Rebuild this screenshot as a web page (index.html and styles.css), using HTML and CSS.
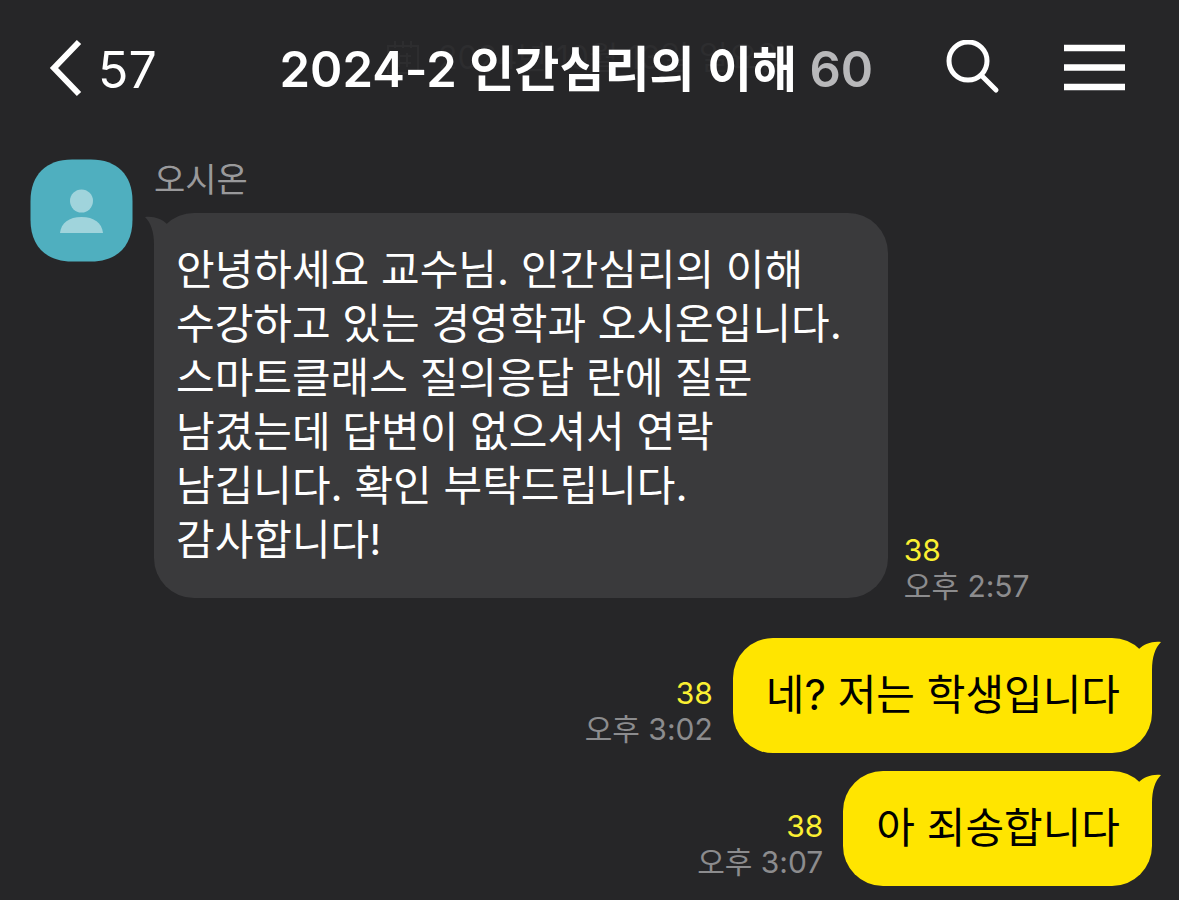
FILE: index.html
```html
<!DOCTYPE html>
<html lang="ko">
<head>
  <meta charset="UTF-8" />
  <meta name="viewport" content="width=device-width, initial-scale=1.0" />
  <title>2024-2 인간심리의 이해</title>
  <link rel="stylesheet" href="styles.css">
</head>
<body>
  <header>
    <a class="back" href="#" aria-label="뒤로, 안 읽은 메시지 57">
      <svg width="34" height="58" viewBox="0 0 34 58" aria-hidden="true">
        <path d="M31 3 L6 29 L31 55" fill="none" stroke="#fff" stroke-width="6"/>
      </svg>
      <span>57</span>
    </a>

    <!-- 헤더 뒤로 지나가는 날짜 -->
    <div class="date-ghost">
      <svg width="34" height="34" viewBox="0 0 34 34" aria-hidden="true">
        <path d="M2 5h30v27H2zM9 0v7M17 0v7M25 0v7M9 15h16M9 22h16M13 12v14M21 12v14" fill="none" stroke="currentColor" stroke-width="2"/>
      </svg>
      <span>2024년 10월 13일 일요일</span>
    </div>

    <h1>2024-2 인간심리의 이해 <span class="members">60</span></h1>

    <div class="actions">
      <button type="button" aria-label="검색">
        <svg width="56" height="56" viewBox="0 0 56 56" aria-hidden="true">
          <circle cx="22" cy="21" r="19" fill="none" stroke="#fff" stroke-width="5"/>
          <path d="M36 36 L50 50" stroke="#fff" stroke-width="5" stroke-linecap="round"/>
        </svg>
      </button>
      <button type="button" aria-label="메뉴">
        <svg width="61" height="56" viewBox="0 0 61 56" aria-hidden="true">
          <path d="M0 8h61M0 27.500h61M0 47h61" stroke="#fff" stroke-width="6.500"/>
        </svg>
      </button>
    </div>
  </header>

  <main>
    <section class="message">
      <svg class="avatar" width="103" height="103" viewBox="0 0 103 103" role="img" aria-label="프로필">
        <path d="M42 .5H61C87 .5 102.500 16 102.500 42V61C102.500 87 87 102.500 61 102.500H42C16 102.500 .5 87 .5 61V42C.5 16 16 .5 42 .5z" fill="#4fafbf"/>
        <circle cx="51.500" cy="42" r="11.500" fill="#a0d4dc"/>
        <path d="M30 74c1-10 9-16 21.500-16S72 64 73 74z" fill="#a0d4dc"/>
      </svg>
      <div class="body">
        <div class="name">오시온</div>
        <div class="row">
          <div class="bubble">
            <svg class="tail" width="32" height="44" viewBox="0 0 32 44" aria-hidden="true">
              <path d="M0 4c9-1 17 2 22 7l10 0v33H9V32C9 19 6 10 0 4z"/>
            </svg>
            <p>안녕하세요 교수님. 인간심리의 이해<br>수강하고 있는 경영학과 오시온입니다.<br>스마트클래스 질의응답 란에 질문<br>남겼는데 답변이 없으셔서 연락<br>남깁니다. 확인 부탁드립니다.<br>감사합니다!</p>
          </div>
          <div class="meta">
            <span class="unread">38</span>
            <time>오후 2:57</time>
          </div>
        </div>
      </div>
    </section>

    <section class="row mine">
      <div class="meta">
        <span class="unread">38</span>
        <time>오후 3:02</time>
      </div>
      <div class="bubble">
        <svg class="tail" width="32" height="44" viewBox="0 0 32 44" aria-hidden="true">
          <path d="M0 4c9-1 17 2 22 7l10 0v33H9V32C9 19 6 10 0 4z"/>
        </svg>
        <p>네? 저는 학생입니다</p>
      </div>
    </section>

    <section class="row mine">
      <div class="meta">
        <span class="unread">38</span>
        <time>오후 3:07</time>
      </div>
      <div class="bubble">
        <svg class="tail" width="32" height="44" viewBox="0 0 32 44" aria-hidden="true">
          <path d="M0 4c9-1 17 2 22 7l10 0v33H9V32C9 19 6 10 0 4z"/>
        </svg>
        <p>아 죄송합니다</p>
      </div>
    </section>
  </main>
</body>
</html>
```
FILE: styles.css
```css
:root {
  --bg: #262628;
  --bubble: #3a3a3c;
  --yellow: #ffe500;
  --unread: #fbf032;
  --muted: #8c8c8e;
}

* {
  box-sizing: border-box;
  margin: 0;
  padding: 0;
}

body {
  background: var(--bg);
  color: #fff;
  font-family: Inter, 'Noto Sans CJK KR', sans-serif;
}

svg {
  display: block;
}

header {
  position: relative;
  display: flex;
  align-items: center;
  height: 136px;
  padding: 0 54px 0 48px;
}
.back {
  display: flex;
  align-items: center;
  gap: 16px;
  color: #fff;
  font-size: 50px;
  line-height: 60px;
  text-decoration: none;
}
.back span, header h1 {
  padding-top: 4px;
}
header h1 {
  position: relative;
  flex: 1;
  padding-left: 50px;
  font-size: 49px;
  font-weight: 600;
  line-height: 60px;
  text-align: center;
  white-space: nowrap;
}
header .members {
  color: #b8b8ba;
}
.date-ghost {
  position: absolute;
  top: 40px;
  left: 386px;
  display: flex;
  align-items: center;
  gap: 18px;
  color: #2d2d2f;
  font-size: 32px;
  line-height: 36px;
  white-space: nowrap;
}
.actions {
  display: flex;
  align-items: center;
  gap: 62px;
}
.actions button {
  background: none;
  border: none;
  cursor: pointer;
}

main {
  padding: 23px 27px 14px 30px;
}

.message {
  display: flex;
  gap: 21px;
  margin-bottom: 40px;
}
.avatar {
  flex-shrink: 0;
}
.name {
  height: 54px;
  color: #99999b;
  font-size: 34px;
  line-height: 42px;
}

.row {
  display: flex;
  align-items: flex-end;
  gap: 16px;
}
.bubble {
  position: relative;
  padding: 30px 46px 31px 22px;
  border-radius: 40px;
  background: var(--bubble);
  font-size: 42px;
  line-height: 54px;
}
.tail {
  position: absolute;
  top: 0;
  left: -9px;
  fill: var(--bubble);
}

.meta {
  display: flex;
  flex-direction: column;
  margin-bottom: -6px;
  color: var(--muted);
  font-size: 30px;
  line-height: 36px;
}
.unread {
  color: var(--unread);
}

.mine {
  justify-content: flex-end;
  gap: 20px;
  margin-bottom: 18px;
}
.mine .meta {
  margin-bottom: 6px;
  text-align: right;
}
.mine .bubble {
  padding: 30px 32px 31px 33px;
  background: var(--yellow);
  color: #000;
}
.mine .tail {
  left: auto;
  right: -9px;
  fill: var(--yellow);
  transform: scaleX(-1);
}
```
